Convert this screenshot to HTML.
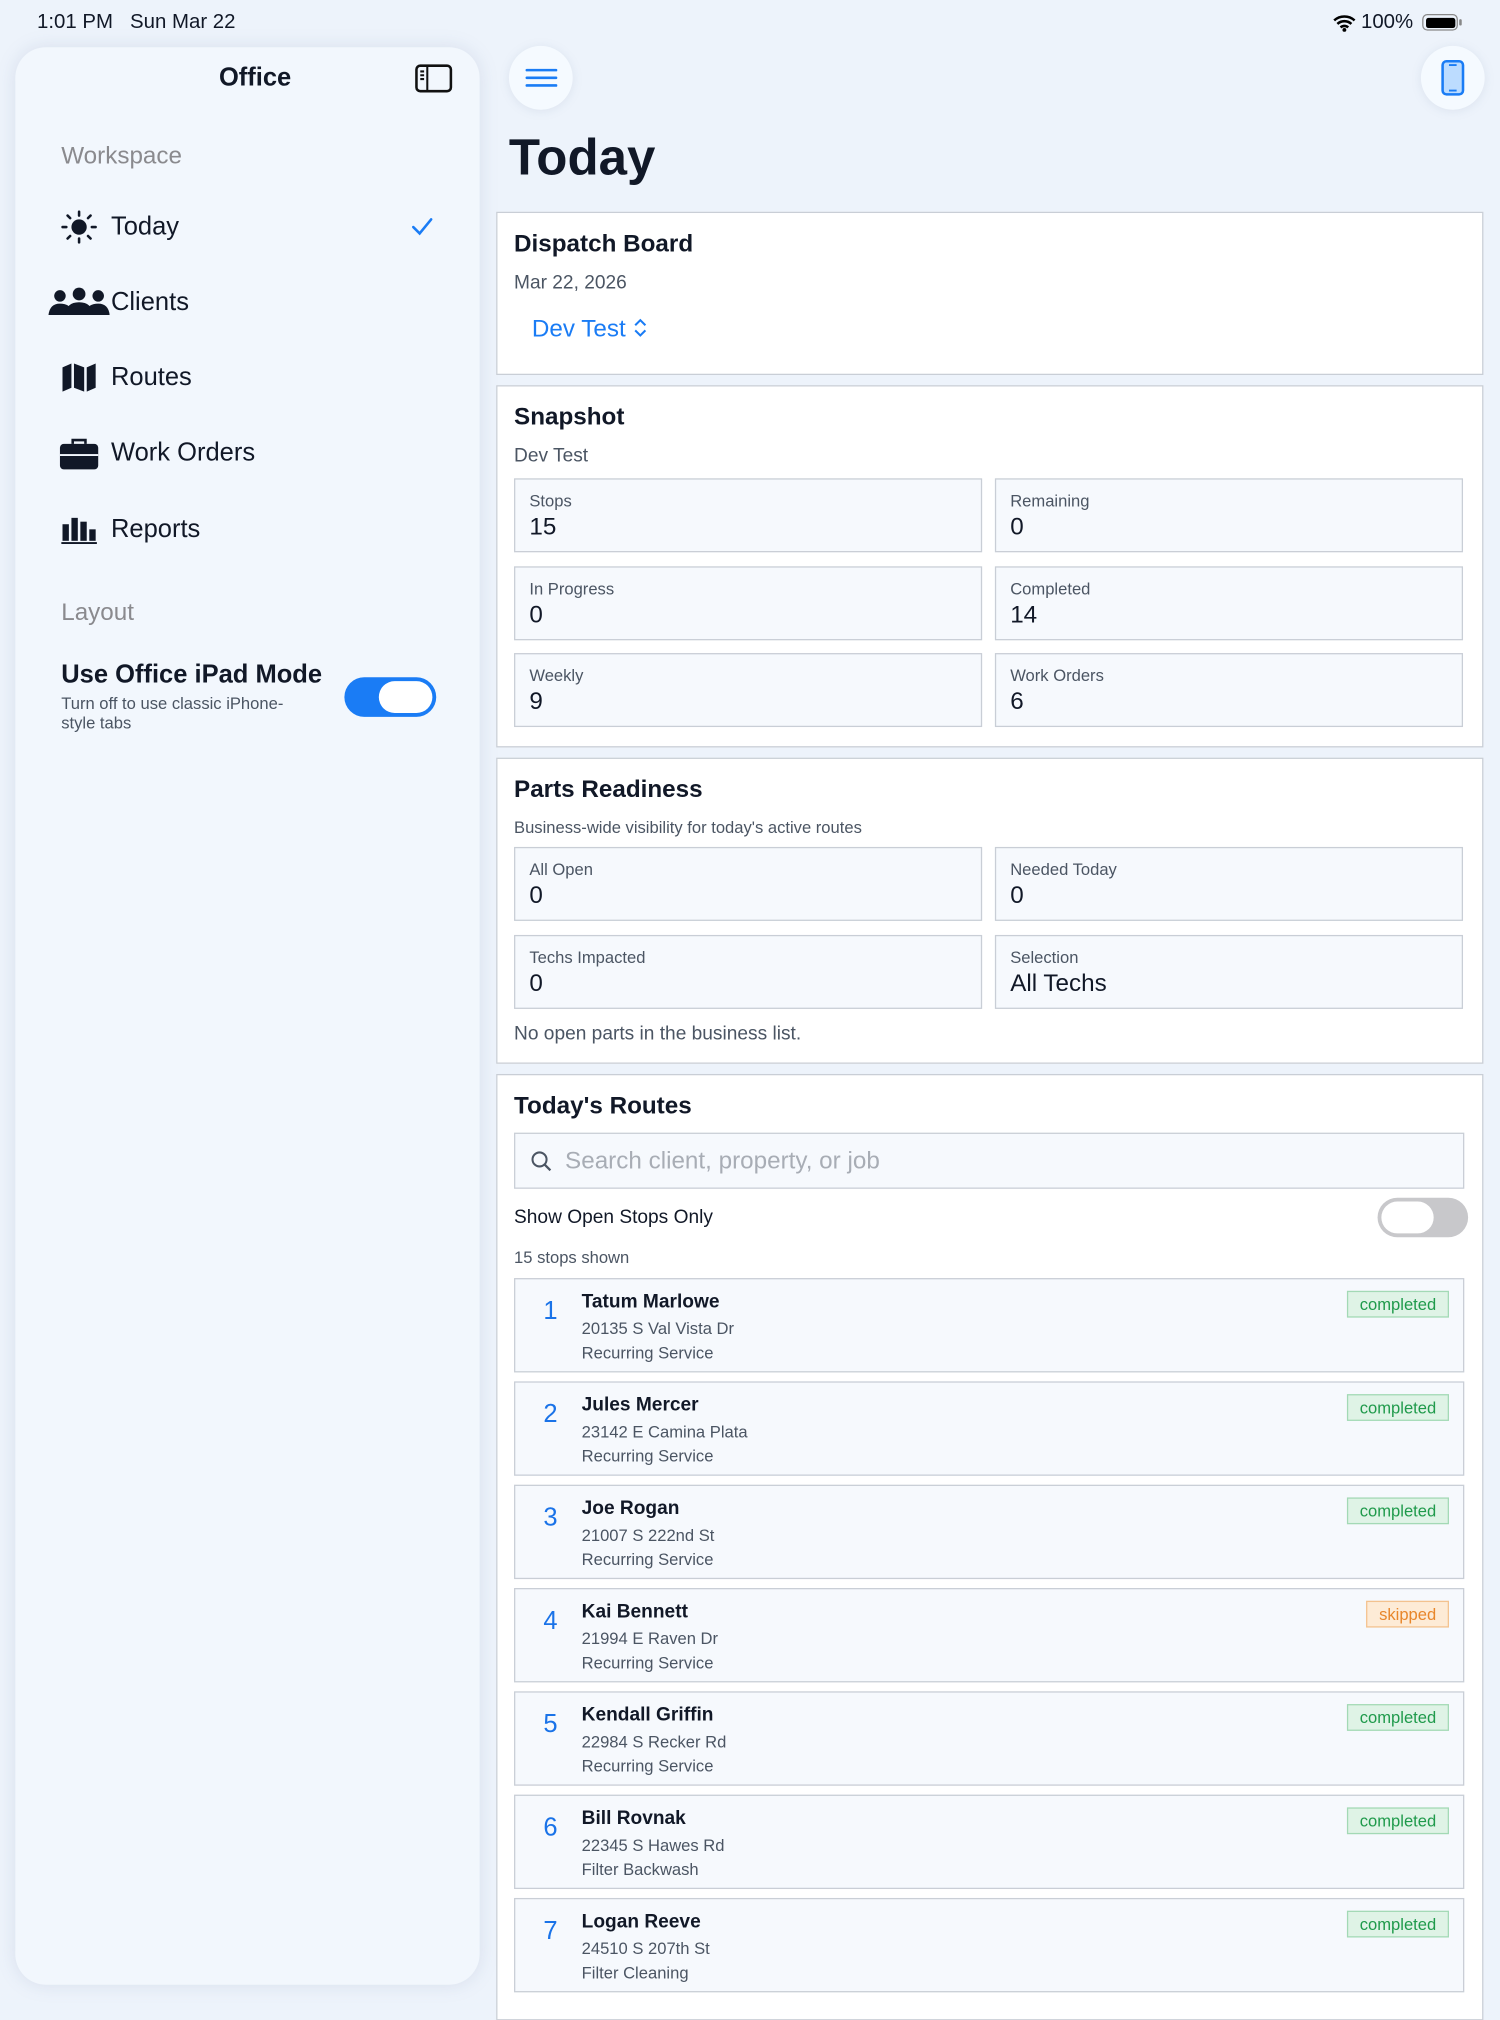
<!DOCTYPE html>
<html><head><meta charset="utf-8"><style>
html,body{margin:0;padding:0;width:1500px;height:2000px;overflow:hidden;background:#edf3fb;}
#w{position:absolute;left:0;top:0;width:1176px;height:1568px;transform:scale(1.27551);transform-origin:0 0;font-family:"Liberation Sans",sans-serif;color:#111827;}
.a{position:absolute;white-space:nowrap;}
.side{position:absolute;left:12px;top:37px;width:364px;height:1519px;border-radius:24px;background:#f2f7fd;box-shadow:0 0 14px rgba(120,140,170,.18);}
.card{position:absolute;left:389px;width:772px;background:#fff;border:1px solid #c9ced6;}
.ct{position:absolute;left:13px;font-size:19px;font-weight:bold;color:#111827;}
.tile{position:absolute;width:367px;height:58px;background:#f6f9fd;border:1px solid #c9ced6;box-sizing:border-box;}
.tile .l{position:absolute;left:11px;top:9px;font-size:13px;color:#4b5563;}
.tile .v{position:absolute;left:11px;top:27px;font-size:19px;color:#111827;}
.row{position:absolute;left:13px;width:745px;height:74px;background:#f6f9fd;border:1px solid #c9ced6;box-sizing:border-box;}
.row .n{position:absolute;left:22px;top:14px;font-size:20px;color:#1a73e8;}
.row .nm{position:absolute;left:52px;top:9px;font-size:15px;font-weight:bold;color:#111827;}
.row .ad{position:absolute;left:52px;top:31px;font-size:13px;color:#4b5563;}
.row .sv{position:absolute;left:52px;top:50px;font-size:13px;color:#4b5563;}
.bd{position:absolute;top:9px;right:11px;height:21px;line-height:20px;padding:0 9px;font-size:13px;box-sizing:border-box;}
.g{background:#dff3e6;border:1px solid #a3d9b5;color:#1f9a4b;}
.o{background:#fdebd6;border:1px solid #f3c28f;color:#e8862a;}
.nav{position:absolute;left:87px;font-size:20px;color:#111827;}
</style></head><body><div id="w">
<div class="a" style="left:29px;top:9px;font-size:16px;">1:01 PM&nbsp;&nbsp;&nbsp;Sun Mar 22</div>
<svg class="a" style="left:1045px;top:11px" width="18" height="14" viewBox="0 0 18 14"><path d="M1 5a12 12 0 0 1 16 0M3.5 7.8a8 8 0 0 1 11 0M6 10.5a4.5 4.5 0 0 1 6 0" stroke="#000" stroke-width="2" fill="none"/><circle cx="9" cy="12.5" r="1.5"/></svg>
<div class="a" style="left:1067px;top:9px;font-size:16px;">100%</div>
<div class="a" style="left:1115px;top:11px;width:28px;height:13px;border:1.5px solid #888;border-radius:4px;box-sizing:border-box;padding:1.5px"><div style="width:100%;height:100%;background:#000;border-radius:2px"></div></div>
<div class="a" style="left:1144px;top:15px;width:2px;height:5px;background:#888;border-radius:1px"></div>

<div class="side"></div>
<div class="a" style="left:0;width:400px;text-align:center;top:50px;font-size:20px;font-weight:bold;">Office</div>
<svg class="a" style="left:325px;top:50px" width="30" height="24" viewBox="0 0 30 24"><rect x="1.5" y="1.5" width="27" height="20" rx="3" fill="none" stroke="#111" stroke-width="2"/><path d="M10 2v19M4.5 6h3M4.5 9h3M4.5 12h3" stroke="#111" stroke-width="1.6"/></svg>
<div class="a" style="left:48px;top:112px;font-size:19px;color:#8a8a8e;">Workspace</div>
<svg class="a" style="left:48px;top:165px" width="28" height="26" viewBox="0 0 28 26"><circle cx="14" cy="13" r="6" fill="#111827"/><g stroke="#111827" stroke-width="2" stroke-linecap="round"><path d="M14 1v3M14 22v3M1 13h3M24 13h3M5 4l2 2M21 20l2 2M5 22l2-2M21 6l2-2"/></g></svg>
<div class="nav" style="top:167px">Today</div>
<svg class="a" style="left:322px;top:170px" width="18" height="16" viewBox="0 0 18 16"><path d="M2 8l5 5L16 2" stroke="#1a7cf5" stroke-width="2" fill="none" stroke-linecap="round"/></svg>
<svg class="a" style="left:38px;top:225px" width="48" height="24" viewBox="0 0 48 24"><g fill="#111827"><circle cx="9" cy="7" r="4.5"/><circle cx="24" cy="5.5" r="5"/><circle cx="39" cy="7" r="4.5"/><path d="M0 22q1-9 9-9t9 6v3z"/><path d="M30 22v-3q1-6 9-6t9 9z"/><path d="M13 22q1-10 11-10t11 10z"/></g></svg>
<div class="nav" style="top:226px">Clients</div>
<svg class="a" style="left:48px;top:283px" width="28" height="26" viewBox="0 0 28 26"><path d="M1 5l7-3v19l-7 3zM10 2l8 3v19l-8-3zM20 5l7-3v19l-7 3z" fill="#111827"/></svg>
<div class="nav" style="top:285px">Routes</div>
<svg class="a" style="left:46px;top:343px" width="32" height="26" viewBox="0 0 32 26"><path d="M11 5V2h10v3" stroke="#111827" stroke-width="2" fill="none"/><rect x="1" y="5" width="30" height="20" rx="3" fill="#111827"/><rect x="1" y="13" width="30" height="1.5" fill="#f2f7fd"/></svg>
<div class="nav" style="top:344px">Work Orders</div>
<svg class="a" style="left:48px;top:403px" width="28" height="24" viewBox="0 0 28 24"><g fill="#111827"><rect x="1" y="8" width="5" height="13"/><rect x="8" y="3" width="5" height="18"/><rect x="15" y="6" width="5" height="15"/><rect x="22" y="12" width="5" height="9"/><rect x="0" y="22" width="28" height="1.5"/></g></svg>
<div class="nav" style="top:404px">Reports</div>
<div class="a" style="left:48px;top:470px;font-size:19px;color:#8a8a8e;">Layout</div>
<div class="a" style="left:48px;top:518px;font-size:20px;font-weight:bold;">Use Office iPad Mode</div>
<div class="a" style="left:48px;top:544px;font-size:13px;color:#4b5563;line-height:15px;white-space:normal;width:200px;">Turn off to use classic iPhone-style tabs</div>
<div class="a" style="left:270px;top:531px;width:72px;height:31px;border-radius:16px;background:#1a7cf5;"><div style="position:absolute;right:3px;top:3px;width:42px;height:25px;border-radius:13px;background:#fff"></div></div>

<div class="a" style="left:399px;top:36px;width:50px;height:50px;border-radius:25px;background:#f5faff;box-shadow:0 1px 8px rgba(120,140,170,.15)"></div>
<svg class="a" style="left:412px;top:52px" width="25" height="18" viewBox="0 0 25 18"><path d="M1 3h23M1 9h23M1 15h23" stroke="#1a7cf5" stroke-width="2" stroke-linecap="round"/></svg>
<div class="a" style="left:1114px;top:36px;width:50px;height:50px;border-radius:25px;background:#f5faff;box-shadow:0 1px 8px rgba(120,140,170,.15)"></div>
<svg class="a" style="left:1129px;top:46px" width="20" height="30" viewBox="0 0 20 30"><rect x="2" y="2" width="16" height="26" rx="3" fill="#bcdcff" stroke="#1a7cf5" stroke-width="2"/><path d="M7 5h6M7 25h6" stroke="#1a7cf5" stroke-width="1.5"/></svg>
<div class="a" style="left:399px;top:102px;font-size:40px;font-weight:bold;">Today</div>

<div class="card" style="top:166px;height:126px;">
<div class="ct" style="top:14px">Dispatch Board</div>
<div class="a" style="left:13px;top:46px;font-size:15px;color:#4b5563;">Mar 22, 2026</div>
<div class="a" style="left:27px;top:81px;font-size:19px;color:#1a7cf5;">Dev Test <svg width="12" height="18" viewBox="0 0 12 18" style="vertical-align:-2px"><path d="M2 7l4-4 4 4M2 11l4 4 4-4" stroke="#1a7cf5" stroke-width="1.6" fill="none"/></svg></div>
</div>

<div class="card" style="top:302px;height:282px;">
<div class="ct" style="top:14px">Snapshot</div>
<div class="a" style="left:13px;top:46px;font-size:15px;color:#4b5563;">Dev Test</div>
<div class="tile" style="left:13px;top:72px"><div class="l">Stops</div><div class="v">15</div></div>
<div class="tile" style="left:390px;top:72px"><div class="l">Remaining</div><div class="v">0</div></div>
<div class="tile" style="left:13px;top:141px"><div class="l">In Progress</div><div class="v">0</div></div>
<div class="tile" style="left:390px;top:141px"><div class="l">Completed</div><div class="v">14</div></div>
<div class="tile" style="left:13px;top:209px"><div class="l">Weekly</div><div class="v">9</div></div>
<div class="tile" style="left:390px;top:209px"><div class="l">Work Orders</div><div class="v">6</div></div>
</div>

<div class="card" style="top:594px;height:238px;">
<div class="ct" style="top:14px">Parts Readiness</div>
<div class="a" style="left:13px;top:46px;font-size:13px;color:#4b5563;">Business-wide visibility for today's active routes</div>
<div class="tile" style="left:13px;top:69px"><div class="l">All Open</div><div class="v">0</div></div>
<div class="tile" style="left:390px;top:69px"><div class="l">Needed Today</div><div class="v">0</div></div>
<div class="tile" style="left:13px;top:138px"><div class="l">Techs Impacted</div><div class="v">0</div></div>
<div class="tile" style="left:390px;top:138px"><div class="l">Selection</div><div class="v">All Techs</div></div>
<div class="a" style="left:13px;top:207px;font-size:15px;color:#4b5563;">No open parts in the business list.</div>
</div>

<div class="card" style="top:842px;height:740px;">
<div class="ct" style="top:14px">Today's Routes</div>
<div class="a" style="left:13px;top:45px;width:745px;height:44px;background:#f6f9fd;border:1px solid #c9ced6;box-sizing:border-box;">
<svg class="a" style="left:12px;top:13px" width="17" height="17" viewBox="0 0 17 17"><circle cx="7" cy="7" r="5.5" stroke="#4b5563" stroke-width="1.6" fill="none"/><path d="M11 11l4.5 4.5" stroke="#4b5563" stroke-width="1.8"/></svg>
<div class="a" style="left:39px;top:11px;font-size:19px;color:#a8adb5;">Search client, property, or job</div></div>
<div class="a" style="left:13px;top:103px;font-size:15px;color:#111827;">Show Open Stops Only</div>
<div class="a" style="left:690px;top:96px;width:71px;height:31px;border-radius:16px;background:#c8c8cb;"><div style="position:absolute;left:3px;top:3px;width:41px;height:25px;border-radius:13px;background:#fff"></div></div>
<div class="a" style="left:13px;top:135px;font-size:13px;color:#4b5563;">15 stops shown</div>
<div class="row" style="top:159px"><div class="n">1</div><div class="nm">Tatum Marlowe</div><div class="ad">20135 S Val Vista Dr</div><div class="sv">Recurring Service</div><div class="bd g">completed</div></div>
<div class="row" style="top:240px"><div class="n">2</div><div class="nm">Jules Mercer</div><div class="ad">23142 E Camina Plata</div><div class="sv">Recurring Service</div><div class="bd g">completed</div></div>
<div class="row" style="top:321px"><div class="n">3</div><div class="nm">Joe Rogan</div><div class="ad">21007 S 222nd St</div><div class="sv">Recurring Service</div><div class="bd g">completed</div></div>
<div class="row" style="top:402px"><div class="n">4</div><div class="nm">Kai Bennett</div><div class="ad">21994 E Raven Dr</div><div class="sv">Recurring Service</div><div class="bd o">skipped</div></div>
<div class="row" style="top:483px"><div class="n">5</div><div class="nm">Kendall Griffin</div><div class="ad">22984 S Recker Rd</div><div class="sv">Recurring Service</div><div class="bd g">completed</div></div>
<div class="row" style="top:564px"><div class="n">6</div><div class="nm">Bill Rovnak</div><div class="ad">22345 S Hawes Rd</div><div class="sv">Filter Backwash</div><div class="bd g">completed</div></div>
<div class="row" style="top:645px"><div class="n">7</div><div class="nm">Logan Reeve</div><div class="ad">24510 S 207th St</div><div class="sv">Filter Cleaning</div><div class="bd g">completed</div></div>
</div>
</div></body></html>
